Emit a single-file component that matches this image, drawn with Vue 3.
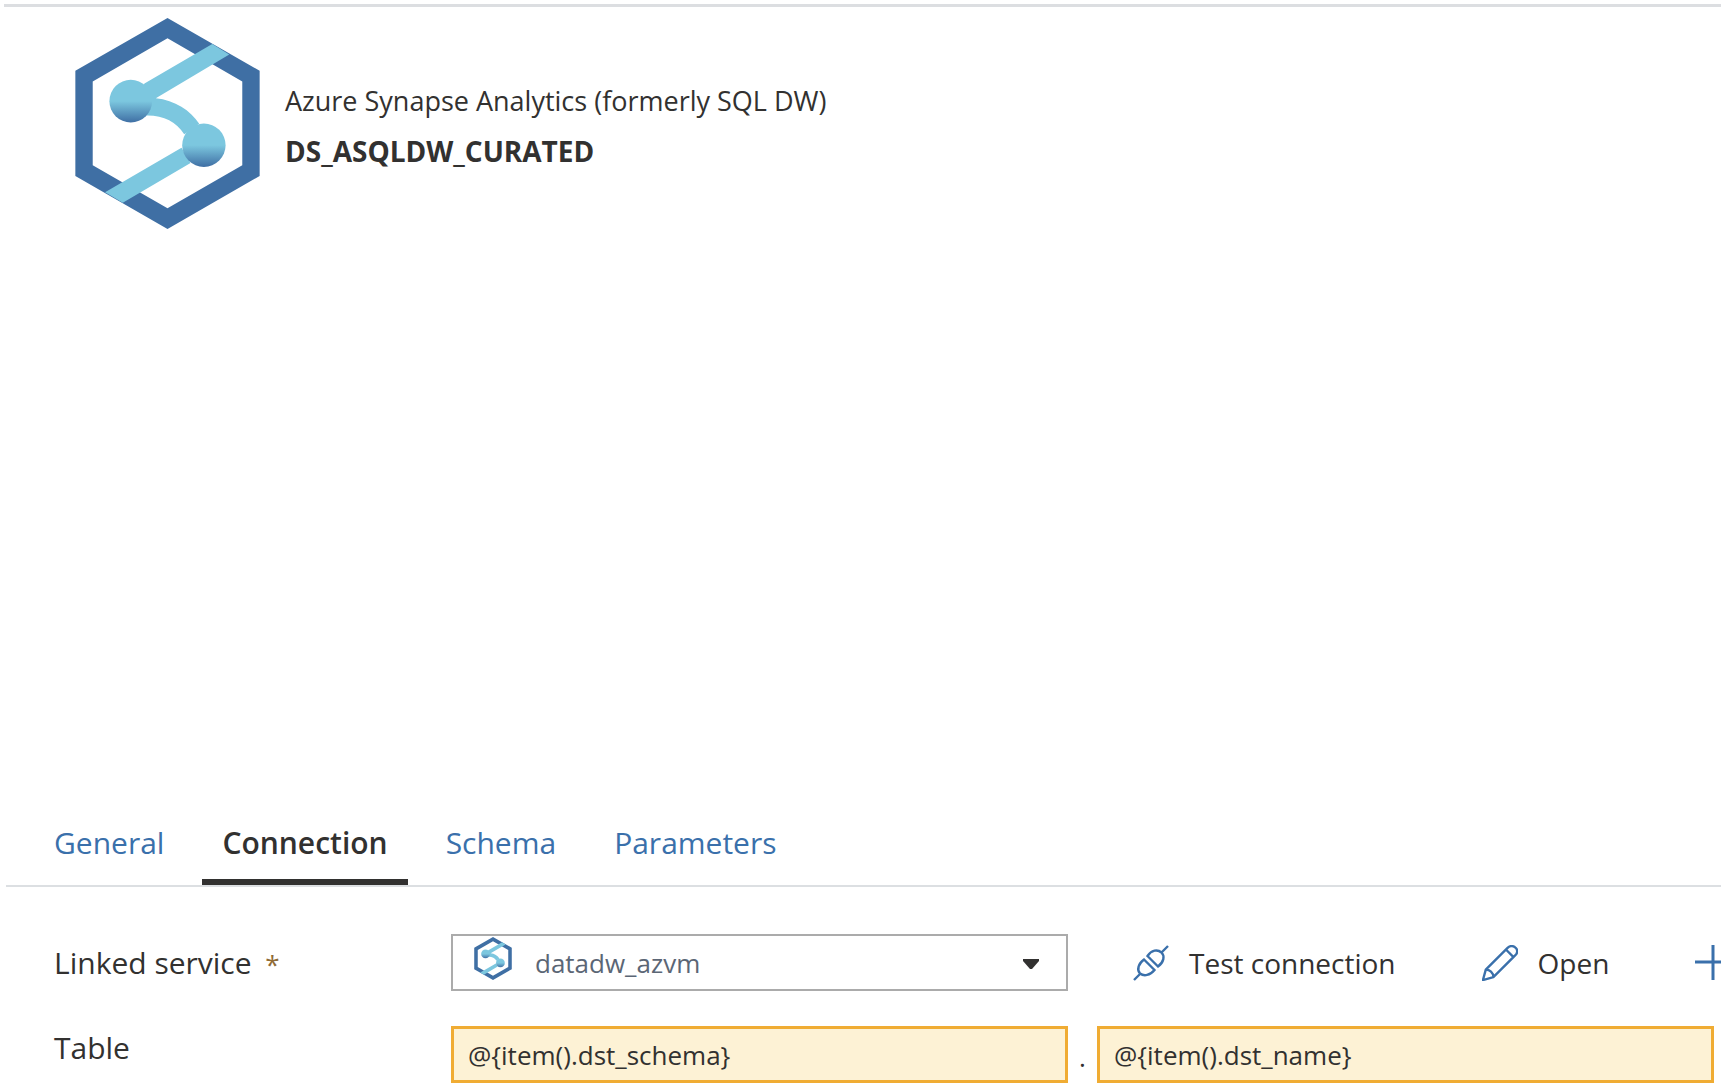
<script setup>
import { ref } from 'vue'

const tabs = ['General', 'Connection', 'Schema', 'Parameters']
const activeTab = ref('Connection')
const linkedService = ref('datadw_azvm')
const schemaName = ref('@{item().dst_schema}')
const tableName = ref('@{item().dst_name}')
</script>

<template>
  <main class="page">
    <svg class="defs" aria-hidden="true">
      <defs>
        <linearGradient id="ball" x1="0" y1="0" x2="0" y2="1">
          <stop offset="0.5" stop-color="#7cc7df" />
          <stop offset="1" stop-color="#3f6fa4" />
        </linearGradient>
        <symbol id="synapse" viewBox="226 54 554 632">
          <path fill="#3f6fa4" fill-rule="evenodd" d="M503 54 779 212V527L503 686 227 527V212ZM503 115 279 244V495L503 624 727 495V244Z" />
          <path fill="#7cc7df" d="M637 132 688 163 468 294C525 300 572 330 598 371L553 402C530 365 490 345 440 346L400 300 434 250ZM545 443 572 488 369 607 316 576Z" />
          <circle cx="393" cy="303" r="64" fill="url(#ball)" />
          <circle cx="612" cy="435" r="65" fill="url(#ball)" />
        </symbol>
      </defs>
    </svg>

    <header class="summary">
      <svg class="logo" aria-hidden="true"><use href="#synapse" /></svg>
      <div class="titles">
        <p class="kind">Azure Synapse Analytics (formerly SQL DW)</p>
        <h1 class="name">DS_ASQLDW_CURATED</h1>
      </div>
    </header>

    <nav class="tabs" role="tablist">
      <button
        v-for="tab in tabs"
        :key="tab"
        type="button"
        role="tab"
        class="tab"
        :class="{ active: tab === activeTab }"
        :aria-selected="tab === activeTab"
        @click="activeTab = tab"
      >{{ tab }}</button>
    </nav>

    <form class="form" @submit.prevent>
      <div class="row">
        <label class="label" for="linked">Linked service <span class="required">*</span></label>
        <div class="picker">
          <svg class="picker-icon" aria-hidden="true"><use href="#synapse" /></svg>
          <select id="linked" v-model="linkedService" class="select">
            <option>datadw_azvm</option>
          </select>
          <svg class="caret" viewBox="0 0 16 10" aria-hidden="true"><path d="M0 0H16V2L9 10H7L0 2Z" fill="#323130" /></svg>
        </div>
        <div class="actions">
          <button type="button" class="action">
            <svg class="icon" viewBox="0 0 36 36" fill="none" stroke="#3a70ab" stroke-width="2.400" aria-hidden="true">
              <path d="M1 35 7 29M29 7 35 1M11 14.500 21.500 25C17 30.500 11 31.500 7 28.500C3.500 24.500 5.500 18.500 11 14.500ZM14.500 11 25 21.500C31 17 32 11 28.500 7.500C24.500 4 18.500 5 14.500 11Z" />
            </svg>
            Test connection
          </button>
          <button type="button" class="action">
            <svg class="icon" viewBox="0 0 38 38" fill="none" stroke="#3a70ab" stroke-width="2.500" stroke-linejoin="round" aria-hidden="true">
              <path d="M1 37 4 26 27 3C30 0 34 1 35.500 3C38 5 37.500 9 35 11L12 34ZM4 26C8 26 12 29 12 34M25.500 5 33 12.500" />
            </svg>
            Open
          </button>
          <button type="button" class="action" aria-label="New">
            <svg class="icon" viewBox="0 0 36 36" stroke="#3a70ab" stroke-width="3" aria-hidden="true"><path d="M0 17H36M18 0V35" /></svg>
          </button>
        </div>
      </div>
      <div class="row">
        <label class="label table-label" for="schema">Table</label>
        <input id="schema" v-model="schemaName" class="field" type="text" />
        <span class="dot">.</span>
        <input v-model="tableName" class="field" type="text" aria-label="Table name" />
      </div>
    </form>
  </main>
</template>

<style>
body {
  margin: 0;
  background: #fff;
}
</style>

<style scoped>
.page {
  padding: 4px 4px 0;
  overflow: hidden;
  color: #323130;
  font-family: 'Segoe UI', 'Open Sans', sans-serif;
}
.defs {
  position: absolute;
  width: 0;
  height: 0;
}
.summary {
  display: flex;
  gap: 25px;
  min-height: 788px;
  padding: 11px 71px 0;
  border-top: 3px solid #dcdee1;
}
.logo {
  width: 185px;
  height: 211px;
}
.titles {
  padding-top: 58px;
}
.kind,
.name {
  margin: 0;
  line-height: 50px;
  white-space: nowrap;
}
.kind {
  font-size: 27px;
  font-weight: 400;
}
.name {
  font-size: 28px;
  font-weight: 700;
}
.tabs {
  display: flex;
  gap: 18px;
  margin-left: 2px;
  padding-left: 28px;
  border-bottom: 2px solid #dcdfe2;
}
.tab {
  height: 79px;
  padding: 1px 20px 0;
  border: 0;
  border-bottom: 6px solid transparent;
  background: none;
  color: #3a70ab;
  font-family: inherit;
  font-size: 30px;
  line-height: 42px;
}
.tab.active {
  border-bottom-color: #323130;
  color: #323130;
  font-weight: 600;
}
.form {
  display: flex;
  flex-direction: column;
  gap: 34px;
  padding: 47px 7px 3px 50px;
}
.row {
  display: grid;
  grid-template-columns: 397px minmax(0, 1fr) 29px minmax(0, 1fr);
  align-items: center;
}
.label {
  padding-top: 2px;
  font-size: 30px;
  line-height: 42px;
}
.table-label {
  padding-bottom: 14px;
}
.required {
  margin-left: 6px;
  color: #8f6a35;
  font-size: 26px;
}
.picker {
  position: relative;
}
.select {
  display: block;
  width: 100%;
  height: 57px;
  padding: 1px 60px 0 82px;
  border: 2px solid #ababab;
  border-radius: 0;
  appearance: none;
  background: #fff;
  color: #5b6675;
  font-family: inherit;
  font-size: 26px;
}
.picker-icon {
  position: absolute;
  top: 3px;
  left: 23px;
  width: 38px;
  height: 43px;
  pointer-events: none;
}
.caret {
  position: absolute;
  top: 25px;
  right: 29px;
  width: 16px;
  height: 10px;
  pointer-events: none;
}
.actions {
  display: flex;
  grid-column: 3 / -1;
  gap: 86px;
  align-items: center;
  margin-right: -7px;
  padding-left: 65px;
  overflow: hidden;
}
.action {
  display: flex;
  flex: none;
  align-items: center;
  gap: 20px;
  padding: 0;
  border: 0;
  background: none;
  color: #323130;
  font-family: inherit;
  font-size: 28px;
  line-height: 42px;
}
.icon {
  width: 36px;
  height: 36px;
}
.field {
  box-sizing: border-box;
  width: 100%;
  height: 57px;
  padding: 1px 14px 0;
  border: 3px solid #f0ac33;
  border-radius: 0;
  background: #fdf2d5;
  color: #323130;
  font-family: inherit;
  font-size: 26px;
}
.dot {
  padding-top: 6px;
  font-size: 26px;
  line-height: 32px;
  text-align: center;
}
</style>
